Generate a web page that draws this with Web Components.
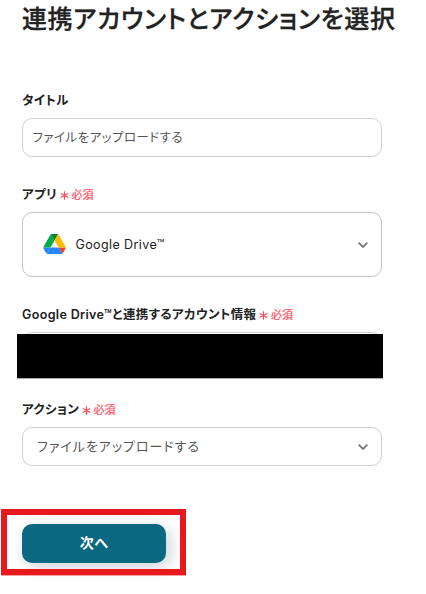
<!DOCTYPE html>
<html lang="ja">
<head>
<meta charset="utf-8">
<title>連携アカウントとアクションを選択</title>
<style>
  body {
    margin: 0;
    background: #fff;
    color: #222;
    font-family: Inter, "Noto Sans CJK JP", sans-serif;
    font-feature-settings: "palt";
    overflow: hidden;
  }
</style>
</head>
<body>
<action-form heading="連携アカウントとアクションを選択">
  <form-field label="タイトル" style="--gap: 25px">
    <field-box style="--pad: 9.5px; --size: 12.5px; --spacing: 0.45px; --lift: 3px; --line: #d0d1d4">ファイルをアップロードする</field-box>
  </form-field>
  <form-field label="アプリ" required style="--gap: 25px">
    <field-box arrow style="--height: 65px; --pad: 20px; --size: 12.5px; --spacing: 0.4px; --lift: 1px; --line: #c4c4c4; --ink: #222">
      <drive-icon></drive-icon>Google Drive™
    </field-box>
  </form-field>
  <form-field label="Google Drive™と連携するアカウント情報" required style="--gap: 26px">
    <field-box masked></field-box>
  </form-field>
  <form-field label="アクション" required style="--gap: 58px">
    <field-box arrow style="--pad: 14px; --size: 13px; --spacing: 0.95px; --lift: 2px">ファイルをアップロードする</field-box>
  </form-field>
  <next-button>次へ</next-button>
</action-form>

<script>
class ActionForm extends HTMLElement {
  constructor () {
    super();
    this.attachShadow({ mode: 'open' });
  }
  connectedCallback () {
    this.shadowRoot.innerHTML = `
      <style>
        :host { display: block; box-sizing: border-box; height: 594px; padding: 0 0 0 22px; }
        h1 {
          margin: 0 0 50px;
          height: 38px;
          font-size: 25px;
          line-height: 38px;
          font-weight: 500;
          letter-spacing: 0.6px;
          -webkit-text-stroke: 0.3px #222;
          white-space: nowrap;
        }
      </style>
      <h1>${this.getAttribute('heading')}</h1>
      <slot></slot>
    `;
  }
}

class FormField extends HTMLElement {
  constructor () {
    super();
    this.attachShadow({ mode: 'open' });
  }
  connectedCallback () {
    const required = this.hasAttribute('required')
      ? `<svg width="9" height="9" viewBox="0 0 9 9"><path d="M4.5 .3v8.4M.8 2.4l7.4 4.2M8.2 2.4L.8 6.6" stroke="#ff4d5e" stroke-width="1.2"/></svg><em>必須</em>`
      : '';
    this.shadowRoot.innerHTML = `
      <style>
        :host { display: block; width: 360px; margin-bottom: var(--gap); }
        .label { display: flex; align-items: center; box-sizing: border-box; height: 24px; padding-bottom: 2px; margin-bottom: 6px; white-space: nowrap; }
        b { font-size: 12.5px; font-weight: 600; letter-spacing: 0.35px; }
        svg { margin: 4px 3px 0 2.5px; }
        em { font-size: 11px; font-style: normal; color: #ff4d5e; padding-top: 2px; -webkit-text-stroke: 0.2px #ff4d5e; }
      </style>
      <div class="label"><b>${this.getAttribute('label')}</b>${required}</div>
      <slot></slot>
    `;
  }
}

class FieldBox extends HTMLElement {
  constructor () {
    super();
    this.attachShadow({ mode: 'open' });
  }
  connectedCallback () {
    const arrow = this.hasAttribute('arrow')
      ? '<svg width="12" height="8" viewBox="0 0 12 8"><path d="M1.7 1.7L6 5.9l4.3-4.2" fill="none" stroke="#777" stroke-width="1.8"/></svg>'
      : '';
    const mask = this.hasAttribute('masked') ? '<div class="mask"></div>' : '';
    this.shadowRoot.innerHTML = `
      <style>
        :host {
          display: flex;
          align-items: center;
          position: relative;
          box-sizing: border-box;
          height: var(--height, 39px);
          padding: 0 12px 0 var(--pad, 12px);
          border: 1px solid var(--line, #cdd0da);
          border-radius: 10px;
          background: #fff;
          color: var(--ink, #555);
          font-size: var(--size, 12px);
          letter-spacing: var(--spacing, 0);
          white-space: nowrap;
        }
        .text { display: flex; align-items: center; flex: 1; padding-bottom: var(--lift, 0); }
        svg { margin-top: 1px; }
        /* the redaction covers the account box and sticks out on every side but the top */
        .mask { position: absolute; left: -6px; top: 1px; width: 366px; height: 44px; background: #000; box-shadow: 0 1px #aaa; }
      </style>
      <div class="text"><slot></slot></div>${arrow}${mask}
    `;
  }
}

class DriveIcon extends HTMLElement {
  constructor () {
    super();
    this.attachShadow({ mode: 'open' });
  }
  connectedCallback () {
    this.shadowRoot.innerHTML = `
      <style>
        :host { display: block; width: 22px; height: 20px; margin-right: 10.5px; }
        svg { display: block; }
      </style>
      <svg width="23" height="20" viewBox="0 0 87.3 78">
        <path d="m6.6 66.85 3.85 6.65c.8 1.4 1.95 2.5 3.3 3.3l13.75-23.8h-27.5c0 1.55.4 3.1 1.2 4.5z" fill="#2684fc"/>
        <path d="m43.65 25-13.75-23.8c-1.35.8-2.5 1.9-3.3 3.3l-25.4 44a9.06 9.06 0 0 0 -1.2 4.5h27.5z" fill="#00ac47"/>
        <path d="m73.55 76.8c1.35-.8 2.5-1.9 3.3-3.3l1.6-2.75 7.65-13.25c.8-1.4 1.2-2.95 1.2-4.5h-27.502l5.852 11.5z" fill="#ea4335"/>
        <path d="m43.65 25 13.75-23.8c-1.35-.8-2.9-1.2-4.5-1.2h-18.5c-1.6 0-3.15.45-4.5 1.2z" fill="#00832d"/>
        <path d="m59.8 53h-32.3l-13.75 23.8c1.35.8 2.9 1.2 4.5 1.2h50.8c1.6 0 3.15-.45 4.5-1.2z" fill="#2684fc"/>
        <path d="m73.4 26.5-12.7-22c-.8-1.4-1.95-2.5-3.3-3.3l-13.75 23.8 16.15 28h27.45c0-1.55-.4-3.1-1.2-4.5z" fill="#ffba00"/>
      </svg>
    `;
  }
}

class NextButton extends HTMLElement {
  constructor () {
    super();
    this.attachShadow({ mode: 'open' });
  }
  connectedCallback () {
    this.shadowRoot.innerHTML = `
      <style>
        :host { display: block; position: relative; width: 144px; height: 39px; }
        button {
          width: 144px;
          height: 39px;
          padding: 0 0 3px;
          border: 0;
          border-radius: 10px;
          background: #0b6881;
          box-shadow: 4px 4px 16px rgba(20, 50, 80, .22);
          color: #fff;
          font: inherit;
          font-feature-settings: inherit;
          font-size: 14px;
          font-weight: 700;
          letter-spacing: 0.5px;
        }
        .frame { position: absolute; box-sizing: border-box; left: -21px; top: -15px; width: 185px; height: 66px; border: 6px solid #e8191c; box-shadow: 0 1px #f4a0a0; }
      </style>
      <button><slot></slot></button>
      <div class="frame"></div>
    `;
  }
}

customElements.define('action-form', ActionForm);
customElements.define('form-field', FormField);
customElements.define('field-box', FieldBox);
customElements.define('drive-icon', DriveIcon);
customElements.define('next-button', NextButton);
</script>
</body>
</html>
